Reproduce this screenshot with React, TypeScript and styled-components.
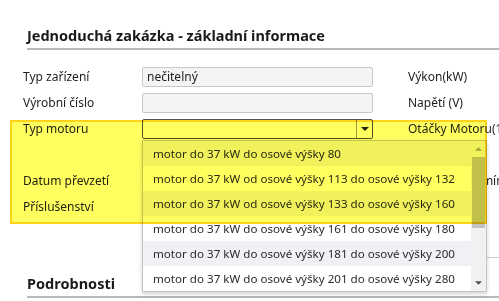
import React from "react";
import styled, { createGlobalStyle } from "styled-components";

const Global = createGlobalStyle`
  html, body { margin: 0; padding: 0; background: #fff; }
  body { font-family: "Noto Sans", "Open Sans", sans-serif; color: #222; overflow: hidden; }
  * { box-sizing: border-box; }
`;

const Page = styled.div`
  position: relative;
  width: 499px;
  height: 301px;
  overflow: hidden;
`;

const Section = styled.section<{ $top: number }>`
  padding-top: ${(p) => p.$top}px;
  padding-left: 27px;
`;

const Heading = styled.h2`
  margin: 0;
  font-size: 14.5px;
  font-weight: 700;
  line-height: 20px;
  color: #1a1a1a;
  padding-bottom: 3px;
  border-bottom: 2px solid #b8b8b8;
`;

const FormGrid = styled.div`
  display: grid;
  grid-template-columns: 119px 231px 35px 120px;
  grid-auto-rows: 26px;
  padding-left: 23px;
  margin-top: 14px;
  align-items: center;
`;

const Label = styled.label`
  grid-column: 1;
  font-size: 12px;
  line-height: 16px;
  color: #1e1e1e;
  white-space: nowrap;
`;

const RightLabel = styled(Label)`
  grid-column: 4;
`;

const Input = styled.div`
  grid-column: 2;
  height: 20px;
  border: 1px solid #c8c8c8;
  border-radius: 2px;
  background: #f4f4f6;
  font-size: 12px;
  line-height: 18px;
  padding-left: 4px;
  color: #222;
`;

const Select = styled.div`
  grid-column: 2;
  height: 20px;
  border: 1px solid #555;
  border-radius: 2px;
  background: #fff;
  display: flex;
`;

const SelectValue = styled.div`
  flex: 1;
`;

const SelectArrow = styled.div`
  width: 16px;
  border-left: 1px solid #9a9a9a;
  display: flex;
  align-items: center;
  justify-content: center;
`;

const EmptyRow = styled.div`
  grid-column: 1 / -1;
`;

const RightRule = styled.div`
  margin: 37px 0 0 408px;
  height: 1px;
  background: #c8c8c8;
`;

const Dropdown = styled.div`
  position: absolute;
  left: 142px;
  top: 140px;
  width: 345px;
  height: 152px;
  background: #fff;
  border: 1px solid #c4c4c4;
  box-shadow: 0 2px 4px rgba(0, 0, 0, 0.18);
  display: flex;
`;

const List = styled.ul`
  list-style: none;
  margin: 0;
  padding: 0;
  flex: 1;
`;

const Item = styled.li<{ $alt: boolean }>`
  height: 25px;
  padding-left: 10px;
  font-size: 11.6px;
  line-height: 25px;
  color: #2a2a2a;
  white-space: nowrap;
  background: ${(p) => (p.$alt ? "#f1f1f5" : "#fff")};
`;

const Scrollbar = styled.div`
  width: 15px;
  background: #f1f1f1;
  display: flex;
  flex-direction: column;
  align-items: center;
`;

const ScrollBtn = styled.div`
  height: 16px;
  width: 15px;
  display: flex;
  align-items: center;
  justify-content: center;
`;

const Thumb = styled.div`
  width: 13px;
  height: 71px;
  background: #c1c1c1;
`;

const Track = styled.div`
  flex: 1;
`;

const Highlight = styled.div`
  position: absolute;
  left: 10px;
  top: 120px;
  width: 477px;
  height: 104px;
  background: #ffff60;
  mix-blend-mode: multiply;
  border: 2px solid #ffd21a;
  pointer-events: none;
`;

const Tri = ({ up, color, w = 7 }: { up?: boolean; color: string; w?: number }) => (
  <svg width={w} height={4} viewBox="0 0 8 4">
    {up ? <path d="M0 4 L4 0 L8 4 Z" fill={color} /> : <path d="M0 0 L8 0 L4 4 Z" fill={color} />}
  </svg>
);

const items = [
  "motor do 37 kW do osové výšky 80",
  "motor do 37 kW od osové výšky 113 do osové výšky 132",
  "motor do 37 kW od osové výšky 133 do osové výšky 160",
  "motor do 37 kW do osové výšky 161 do osové výšky 180",
  "motor do 37 kW do osové výšky 181 do osové výšky 200",
  "motor do 37 kW do osové výšky 201 do osové výšky 280",
];

export default function App() {
  return (
    <Page>
      <Global />
      <Section $top={25}>
        <Heading>Jednoduchá zakázka - základní informace</Heading>
      </Section>
      <FormGrid>
        <Label>Typ zařízení</Label>
        <Input>nečitelný</Input>
        <RightLabel>Výkon(kW)</RightLabel>

        <Label>Výrobní číslo</Label>
        <Input />
        <RightLabel>Napětí (V)</RightLabel>

        <Label>Typ motoru</Label>
        <Select>
          <SelectValue />
          <SelectArrow>
            <Tri color="#222" w={8} />
          </SelectArrow>
        </Select>
        <RightLabel>Otáčky Motoru(1/min)</RightLabel>

        <EmptyRow />

        <Label>Datum převzetí</Label>
        <RightLabel>Smluvený termín ukončení</RightLabel>

        <Label>Příslušenství</Label>
      </FormGrid>
      <RightRule />
      <Section $top={15}>
        <Heading>Podrobnosti</Heading>
      </Section>

      <Dropdown>
        <List>
          {items.map((t, i) => (
            <Item key={i} $alt={i % 2 === 0}>
              {t}
            </Item>
          ))}
        </List>
        <Scrollbar>
          <ScrollBtn>
            <Tri up color="#a3a3a3" />
          </ScrollBtn>
          <Thumb />
          <Track />
          <ScrollBtn>
            <Tri color="#505050" />
          </ScrollBtn>
        </Scrollbar>
      </Dropdown>
      <Highlight />
    </Page>
  );
}
